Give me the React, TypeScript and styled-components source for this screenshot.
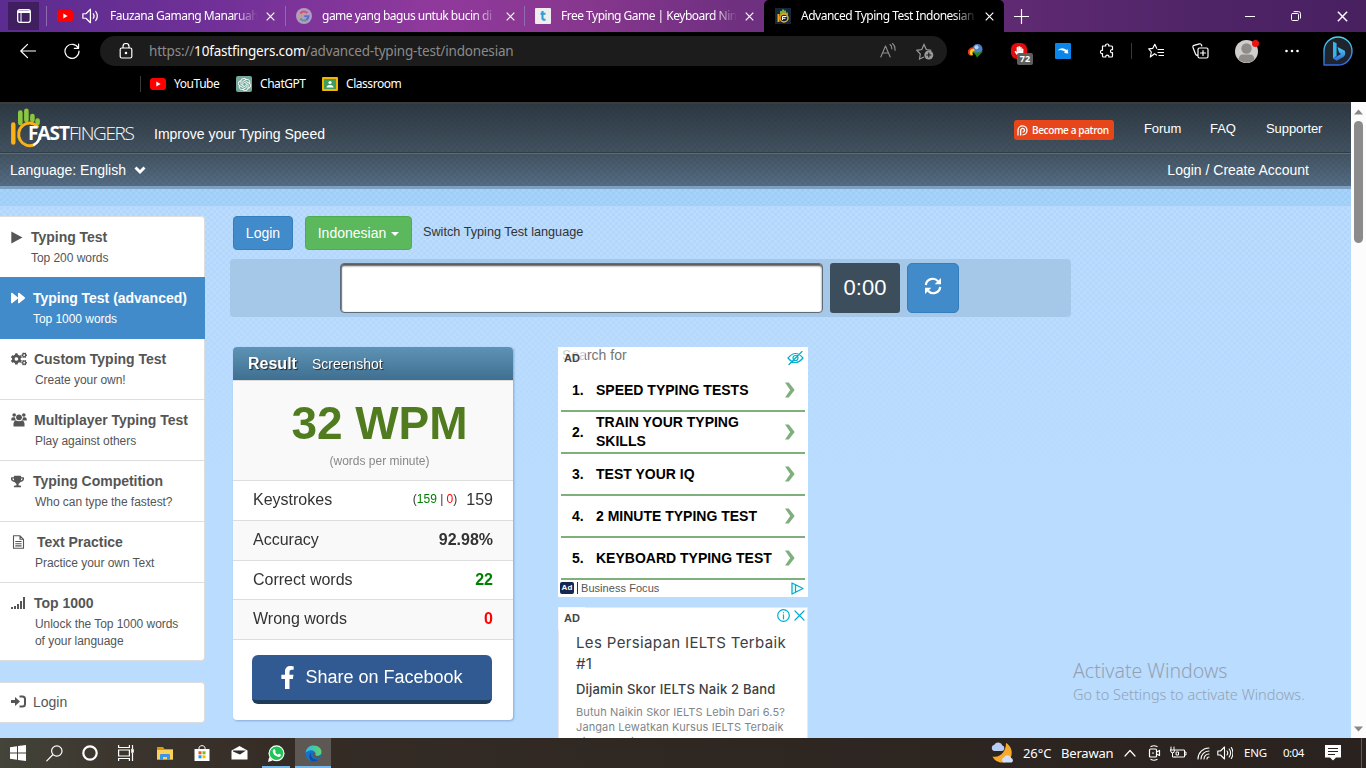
import React from "react";
import styled, { createGlobalStyle, css } from "styled-components";
import {
  FaForward, FaCogs, FaTrophy, FaFacebookF, FaHandPaper,
} from "react-icons/fa";
import { SiOpenai } from "react-icons/si";

const Global = createGlobalStyle`
  * { box-sizing: border-box; }
  html, body { margin: 0; padding: 0; }
  body { width: 1366px; height: 768px; overflow: hidden; background: #000; }
  svg { display: block; flex: none; }
`;

const ui = `"Noto Sans", "Open Sans", sans-serif`;
const arial = `"Liberation Sans", Arial, sans-serif`;

const Desktop = styled.div`
  width: 1366px;
  height: 768px;
  display: flex;
  flex-direction: column;
  font-family: ${arial};
  white-space: nowrap;
`;

/* ---------- browser chrome ---------- */
const TabStrip = styled.div`
  height: 32px;
  flex: none;
  display: flex;
  align-items: center;
  background: linear-gradient(90deg, #5c2c90 0, #6f3097 15%, #90399c 32%, #88378f 42%, #6f3080 54%, #5f2a72 74%, #4f2467 88%, #482060 100%);
`;
const TabActions = styled.div`
  width: 31px;
  height: 28px;
  margin-left: 8px;
  background: #3f1f60;
  display: flex;
  align-items: center;
  justify-content: center;
`;
const Tab = styled.div<{ $w: number; $active?: boolean }>`
  width: ${(p) => p.$w}px;
  height: 32px;
  display: flex;
  align-items: center;
  padding-left: 10px;
  ${(p) => p.$active && css`background: #000; border-radius: 5px 5px 0 0; padding-left: 11px;`}
`;
const Divider = styled.i`
  width: 1px;
  height: 20px;
  background: #8f6bb0;
`;
const TabTitle = styled.span<{ $w: number }>`
  width: ${(p) => p.$w}px;
  margin: 0 8px 1px 10px;
  overflow: hidden;
  font: 12px/18px ${ui};
  letter-spacing: -0.5px;
  color: #fff;
  mask-image: linear-gradient(90deg, #000 calc(100% - 24px), transparent 100%);
`;
const Spacer = styled.div<{ $w?: number }>`
  ${(p) => (p.$w !== undefined ? css`width: ${p.$w}px; flex: none;` : css`flex: 1;`)}
`;

const Toolbar = styled.div`
  height: 38px;
  flex: none;
  display: flex;
  align-items: center;
  background: #000;
`;
const AddressBar = styled.div`
  width: 847px;
  height: 30px;
  border-radius: 15px;
  background: #1c1c1c;
  display: flex;
  align-items: center;
  padding: 0 13px 0 19px;
`;
const Url = styled.span`
  flex: 1;
  padding-left: 16px;
  font: 13.5px/20px ${ui};
  letter-spacing: -0.18px;
  color: #8b8b8b;
  b { font-weight: 400; color: #fff; }
`;
const Extensions = styled.div<{ $gap: number; $pl: number }>`
  display: flex;
  align-items: center;
  gap: ${(p) => p.$gap}px;
  padding-left: ${(p) => p.$pl}px;
`;
const IconBox = styled.div<{ $w?: number; $bg?: string; $r?: number }>`
  position: relative;
  width: ${(p) => p.$w ?? 16}px;
  height: ${(p) => p.$w ?? 16}px;
  border-radius: ${(p) => p.$r ?? 0}px;
  background: ${(p) => p.$bg ?? "none"};
  display: flex;
  align-items: center;
  justify-content: center;
  color: #fff;
  flex: none;
`;
const CountBadge = styled.span`
  position: absolute;
  left: 6px;
  top: 10px;
  width: 16px;
  height: 12px;
  border-radius: 2px;
  background: #5e5e5e;
  color: #fff;
  font: bold 9px/12px ${ui};
  text-align: center;
`;
const AlertDot = styled.i`
  position: absolute;
  right: -1px;
  top: 0;
  width: 7px;
  height: 7px;
  border-radius: 50%;
  background: #e11;
`;
const Bookmarks = styled.div`
  height: 32px;
  flex: none;
  display: flex;
  align-items: center;
  padding: 0 0 4px 140px;
  background: #000;
`;
const BookmarkRule = styled.i`
  width: 1px;
  height: 16px;
  margin-right: 9px;
  background: #3a3a3a;
`;
const BookmarkLabel = styled.span<{ $w: number }>`
  width: ${(p) => p.$w}px;
  margin-left: 8px;
  font: 12px/16px ${ui};
  letter-spacing: -0.45px;
  color: #fff;
`;

/* ---------- page ---------- */
const Viewport = styled.div`
  height: 636px;
  flex: none;
  display: flex;
  overflow: hidden;
`;
const weave = (a: number) =>
  `repeating-conic-gradient(rgba(0,40,90,${a}) 0 25%, transparent 0 50%) 0 0 / 6px 6px`;
const Page = styled.div`
  width: 1351px;
  height: 636px;
  overflow: hidden;
  background: linear-gradient(rgba(186, 220, 255, 0) 100px, #badcff 400px), ${weave(0.035)}, #badcff;
`;
const SiteHeader = styled.header`
  height: 84px;
  border-top: 2px solid #3d3c3b;
  background: ${weave(0.07)}, linear-gradient(#2e3841, #43535f 60%, #566d84);
  color: #fff;
`;
const HeaderMain = styled.div`
  height: 50px;
  display: flex;
  align-items: center;
  border-bottom: 1px solid #5f6c77;
  box-shadow: inset 0 -1px 0 #303c46;
  padding-left: 10px;
`;
const LogoText = styled.span`
  width: 106px;
  margin: 8px 0 0 -23px;
  z-index: 1;
  font: 300 19px/24px "Open Sans", sans-serif;
  letter-spacing: -1.35px;
  b { font-weight: 700; letter-spacing: -1px; }
`;
const Tagline = styled.span`
  width: 880px;
  padding: 11px 0 0 20px;
  font-size: 14px;
  line-height: 18px;
`;
const Patron = styled.a`
  width: 100px;
  height: 20px;
  margin-top: 3px;
  border-radius: 3px;
  background: #e6461a;
  display: flex;
  align-items: center;
  gap: 4px;
  padding-left: 3px;
  font: 600 10px/20px "Open Sans", sans-serif;
  letter-spacing: -0.38px;
`;
const NavLink = styled.a<{ $w: number }>`
  width: ${(p) => p.$w}px;
  margin-left: 30px;
  margin-top: 1px;
  font-size: 13px;
  line-height: 18px;
  letter-spacing: -0.08px;
`;
const HeaderSub = styled.div`
  height: 32px;
  display: flex;
  align-items: center;
  gap: 8px;
  padding: 0 42px 0 10px;
  font-size: 14px;
`;
const SkyBand = styled.div`
  height: 20px;
  border-top: 3px solid #7d9fc0;
  background: ${weave(0.035)}, #a5d3fc;
`;
const Columns = styled.div`
  display: flex;
  align-items: flex-start;
  padding-top: 10px;
`;
const Sidebar = styled.nav`
  width: 205px;
  margin-right: 25px;
  color: #555;
`;
const MenuCard = styled.div`
  background: #fff;
  border: 1px solid #ddd;
  border-left: 0;
  border-top: 0;
  border-radius: 0 4px 4px 0;
  margin-bottom: 21px;
`;
const MenuItem = styled.div<{ $active?: boolean; $h?: number }>`
  height: ${(p) => p.$h ?? 61}px;
  border-top: 1px solid #ddd;
  padding-top: 10px;
  display: flex;
  &:first-child { border-top-right-radius: 4px; }
  ${(p) =>
    p.$active &&
    css`
      position: relative;
      margin-right: -1px;
      color: #fff;
      background: #428bca;
      border-color: #428bca;
      box-shadow: 0 1px 0 #428bca;
    `}
`;
const MenuIcon = styled.div<{ $w: number }>`
  width: ${(p) => p.$w}px;
  height: 20px;
  padding-left: 11px;
  display: flex;
  align-items: center;
`;
const MenuTitle = styled.div`
  font-weight: bold;
  font-size: 14px;
  line-height: 20px;
  letter-spacing: -0.02px;
`;
const MenuSub = styled.div<{ $dx: number }>`
  margin: 3px 0 0 ${(p) => p.$dx}px;
  font-size: 12px;
  line-height: 17px;
  letter-spacing: -0.05px;
  white-space: pre;
`;
const LoginCard = styled(MenuCard)`
  height: 41px;
  border-top: 1px solid #ddd;
  display: flex;
  align-items: center;
  gap: 7px;
  padding: 0 0 2px 11px;
  font-size: 14px;
`;
const Main = styled.main`
  width: 841px;
`;
const ButtonRow = styled.div`
  height: 43px;
  display: flex;
  padding-left: 3px;
`;
const Btn = styled.a<{ $w: number; $c: string; $b: string }>`
  width: ${(p) => p.$w}px;
  height: 34px;
  margin-right: 12px;
  border-radius: 4px;
  border: 1px solid ${(p) => p.$b};
  background: ${(p) => p.$c};
  color: #fff;
  font-size: 14px;
  display: flex;
  align-items: center;
  justify-content: center;
  gap: 5px;
`;
const Caret = styled.i`
  margin-top: 2px;
  border: 4px solid transparent;
  border-top-color: #fff;
  border-bottom: 0;
`;
const SwitchLabel = styled.span`
  margin: 7px 0 0 -1px;
  font-size: 12.7px;
  line-height: 18px;
  color: #333;
`;
const TypingWell = styled.div`
  height: 58px;
  border-radius: 4px;
  background: #a6c8e8;
  display: flex;
  align-items: center;
  gap: 7px;
  padding-left: 110px;
`;
const TypeInput = styled.div`
  width: 483px;
  height: 50px;
  border: 1px solid #5d6b7a;
  border-radius: 4px;
  background: #fff;
  box-shadow: inset 0 2px 2px #555, inset 1px 0 1px #888;
`;
const Timer = styled.div<{ $w: number; $c: string }>`
  width: ${(p) => p.$w}px;
  height: 50px;
  border-radius: 3px;
  background: ${(p) => p.$c};
  color: #fff;
  font-size: 22px;
  display: flex;
  align-items: center;
  justify-content: center;
`;
const Refresh = styled(Timer)`
  border: 1px solid #357ebd;
  border-radius: 5px;
  padding-bottom: 5px;
`;
const Cards = styled.div`
  display: flex;
  align-items: flex-start;
  padding: 30px 0 0 3px;
`;
const Result = styled.section`
  width: 280px;
  height: 373px;
  margin-right: 45px;
  border-radius: 4px;
  overflow: hidden;
  background: #fff;
  filter: drop-shadow(1px 1px 1px rgba(70, 110, 170, 0.45));
`;
const ResultHead = styled.div`
  height: 33px;
  padding-left: 15px;
  display: flex;
  align-items: center;
  gap: 15px;
  background: linear-gradient(#5e93b5, #3f6f90);
  color: #fff;
  text-shadow: 1px 1px 1px #222;
  font-size: 14px;
  b { font-size: 16px; }
`;
const Score = styled.div`
  height: 100px;
  border-top: 1px solid #ddd;
  background: #f9f9f9;
  text-align: center;
  padding: 16px 0 0 13px;
`;
const Wpm = styled.div`
  font-weight: bold;
  font-size: 46px;
  line-height: 52px;
  letter-spacing: -0.1px;
  color: #507b1e;
`;
const WpmNote = styled.div`
  margin-top: 4px;
  font-size: 12px;
  line-height: 17px;
  color: #888;
`;
const StatRow = styled.div<{ $alt?: boolean; $h?: number }>`
  height: ${(p) => p.$h ?? 40}px;
  border-top: 1px solid #ddd;
  background: ${(p) => (p.$alt ? "#f9f9f9" : "#fff")};
  display: flex;
  align-items: center;
  padding: 0 20px ${(p) => (p.$h ? 0 : 2)}px 20px;
  font-size: 16px;
  color: #333;
`;
const Small = styled.span`
  margin-right: 9px;
  padding-bottom: 2px;
  font-size: 12px;
`;
const Tint = styled.span<{ $c: string }>`
  color: ${(p) => p.$c};
`;
const ShareArea = styled.div`
  height: 81px;
  border-top: 1px solid #ddd;
  padding: 15px 0 0 19px;
`;
const ShareButton = styled.div`
  width: 240px;
  height: 49px;
  border-radius: 6px;
  border-bottom: 4px solid #1e3c5a;
  background: #315a92;
  color: #fff;
  font-size: 18px;
  display: flex;
  align-items: center;
  justify-content: center;
  gap: 6px;
  padding-right: 5px;
`;
const Ads = styled.aside`
  display: flex;
  flex-direction: column;
  gap: 10px;
  width: 250px;
`;
const SearchAd = styled.div`
  position: relative;
  height: 250px;
  padding: 0 3px;
  background: #fff;
`;
const SearchFor = styled.div`
  height: 23px;
  padding-left: 1px;
  font-size: 14px;
  line-height: 17px;
  color: #757575;
`;
const AdTag = styled.span<{ $o?: number }>`
  position: absolute;
  left: -${(p) => p.$o ?? 0}px;
  top: -${(p) => p.$o ?? 0}px;
  width: 27px;
  height: 23px;
  padding: 3px 0 0 6px;
  background: rgba(255, 255, 255, 0.65);
  font: bold 11px/17px ${arial};
  color: #444;
`;
const AdCorner = styled.div<{ $t: number; $r: number; $b?: number }>`
  position: absolute;
  right: ${(p) => p.$r}px;
  ${(p) => (p.$b !== undefined ? `bottom: ${p.$b}px;` : `top: ${p.$t}px;`)}
  display: flex;
  gap: 4px;
`;
const AdRow = styled.div`
  height: 42px;
  border-bottom: 2px solid #7faf7c;
  display: flex;
  align-items: center;
  padding: 0 9px 0 11px;
  font: bold 14px/19px ${arial};
  color: #000;
  white-space: normal;
`;
const AdNum = styled.span`
  width: 24px;
`;
const AdLabel = styled.span`
  flex: 1;
`;
const AdFoot = styled.div`
  height: 16px;
  margin-left: -1px;
  display: flex;
  align-items: center;
  gap: 3px;
  font-size: 11px;
  letter-spacing: 0.05px;
  color: #555;
  i { width: 1px; height: 12px; background: #333; }
`;
const AdBadge = styled.b`
  width: 14px;
  height: 12px;
  border-radius: 2px;
  background: #14274f;
  color: #fff;
  font-size: 8px;
  line-height: 12px;
  text-align: center;
`;
const TextAd = styled.div`
  position: relative;
  height: 250px;
  padding: 24px 0 0 18px;
  background: #fff;
  border: 1px solid #e8e8ee;
  font-family: Inter, sans-serif;
`;
const AdLine = styled.div<{ $s: number; $lh: number; $ls: number; $c: string; $mt?: number; $w?: number }>`
  margin: ${(p) => p.$mt ?? 0}px 0 0 -1px;
  font-size: ${(p) => p.$s}px;
  line-height: ${(p) => p.$lh}px;
  letter-spacing: ${(p) => p.$ls}px;
  font-weight: ${(p) => p.$w ?? 400};
  color: ${(p) => p.$c};
`;
const Watermark = styled.div`
  position: absolute;
  left: 1073px;
  top: 658px;
  font: 300 14.5px/20px ${ui};
  color: #93a2b3;
  div { font-size: 19.5px; line-height: 26px; }
`;
const Scrollbar = styled.div`
  width: 15px;
  background: #fcfcfc;
  display: flex;
  flex-direction: column;
  align-items: center;
  padding: 7px 0 6px;
`;
const Thumb = styled.i`
  width: 9px;
  height: 122px;
  margin-top: 6px;
  border-radius: 5px;
  background: #8b8b8b;
`;

/* ---------- taskbar ---------- */
const Taskbar = styled.div`
  height: 30px;
  flex: none;
  display: flex;
  align-items: center;
  background: linear-gradient(90deg, #43443a, #3c362e 8%, #352c26 20%, #2f2722 50%, #2a221e);
  color: #fff;
`;
const TaskButton = styled.div<{ $w: number; $open?: boolean; $active?: boolean }>`
  width: ${(p) => p.$w}px;
  height: 30px;
  display: flex;
  align-items: center;
  justify-content: center;
  background: ${(p) => (p.$active ? "#5d5853" : "none")};
  border-bottom: 2px solid ${(p) => (p.$open ? "#76b9ed" : "transparent")};
  padding-top: 2px;
`;
const TrayText = styled.span<{ $w: number; $s?: number; $ls?: number }>`
  width: ${(p) => p.$w}px;
  font: ${(p) => p.$s ?? 12}px/18px ${ui};
  letter-spacing: ${(p) => p.$ls ?? 0}px;
  padding-bottom: 1px;
`;
const DesktopPeek = styled.i`
  width: 1px;
  height: 30px;
  background: #5f5955;
`;

/* ---------- drawings ---------- */
const YouTubeMark = () => (
  <svg width="16" height="12" viewBox="0 0 16 12"><rect width="16" height="12" rx="3" fill="#f00" /><path d="M6.3 3.5v5L10.6 6z" fill="#fff" /></svg>
);
const Cross = ({ s = 9 }: { s?: number }) => (
  <svg width={s} height={s} viewBox="0 0 9 9"><path d="M.7.7l7.6 7.6M8.3.7L.7 8.3" stroke="#fff" strokeWidth="1.2" /></svg>
);
const Line = ({ w = 16, h = 16, vb, d, c = "#fff", sw = 1.2 }: { w?: number; h?: number; vb?: string; d: string; c?: string; sw?: number }) => (
  <svg width={w} height={h} viewBox={vb ?? `0 0 ${w} ${h}`} fill="none" stroke={c} strokeWidth={sw} strokeLinecap="round" strokeLinejoin="round"><path d={d} /></svg>
);
const GoogleMark = () => (
  <svg width="16" height="16" viewBox="0 0 16 16" fill="none" strokeWidth="2">
    <circle cx="8" cy="8" r="8" fill="#b39cc4" />
    <path d="M11.3 5A4.5 4.5 0 0 0 4.2 5.6" stroke="#d4536a" /><path d="M4.2 5.6a4.5 4.5 0 0 0 0 4.8" stroke="#c9a36a" />
    <path d="M4.2 10.4a4.5 4.5 0 0 0 6.2 1.4" stroke="#5b9a86" /><path d="M10.4 11.8A4.5 4.5 0 0 0 12.5 8.200H8.300" stroke="#5572cc" />
  </svg>
);
const TMark = () => (
  <svg width="16" height="16" viewBox="0 0 16 16"><rect width="16" height="16" rx="1" fill="#eee" /><path d="M7.500 3v7.500q0 1.500 3 1.100M5.500 5.800h5" stroke="#2f9bd8" strokeWidth="2.100" fill="none" /></svg>
);
const HandFavicon = () => (
  <svg width="16" height="16" viewBox="0 0 16 16" fill="none"><rect width="16" height="16" fill="#14283a" />
    <path d="M6 7V3M8 6V1.500M10 6V2.500M12 7V4.500" stroke="#8fbf3a" strokeWidth="1.700" />
    <path d="M3.500 6v8" stroke="#f3a81c" strokeWidth="2" /><circle cx="9" cy="10" r="4" stroke="#f3a81c" strokeWidth="1.500" /><path d="M7.500 12V8.500h4M7.500 10.300h3" stroke="#fff" />
  </svg>
);
const HandLogo = () => (
  <svg width="41" height="46" viewBox="0 0 41 46" fill="none" strokeLinecap="round">
    <path d="M10.300 17V6.500M16.400 14V4.800M22.400 14V10M27.600 17v-2.500" stroke="#8dc63f" strokeWidth="4.600" />
    <path d="M3.300 18.500v18" stroke="#fbb116" strokeWidth="4.400" />
    <path d="M27.500 20.500A11 11.300 0 1 0 24 38.800" stroke="#fbb116" strokeWidth="3" />
    <path d="M24 38.800q5.500-3 6-10" stroke="#fff" strokeWidth="2.400" />
  </svg>
);
const PatreonMark = () => (
  <svg width="11" height="11" viewBox="0 0 11 11" fill="none" stroke="#fff" strokeWidth="1.300"><path d="M1 10.500V5.200A4.500 4.500 0 1 1 5.500 9.900" /><path d="M3.700 10.500V5.300A1.900 1.900 0 1 1 5.600 7.200" /></svg>
);
const BoldChevron = () => (
  <svg width="12" height="8" viewBox="0 0 12 8"><path d="M1.500 1.500L6 6l4.500-4.500" fill="none" stroke="#fff" strokeWidth="2.900" /></svg>
);
const PlayGlyph = () => (
  <svg width="12" height="13" viewBox="0 0 12 13"><path d="M.3.5L11.500 6.500.3 12.500z" fill="#555" /></svg>
);
const PeopleGlyph = () => (
  <svg width="16" height="14" viewBox="0 0 16 14" fill="#555"><circle cx="3.200" cy="2" r="1.800" /><circle cx="12.800" cy="2" r="1.800" /><circle cx="8" cy="4.300" r="2.900" /><path d="M.3 7.500V6q0-1.800 1.800-1.800 1.300 0 2 .4Q4.200 6.500 5 7.500zM15.700 7.500V6q0-1.800-1.800-1.800-1.300 0-2 .4-.1 1.900-.9 2.900zM2.500 13.500v-3q0-2.700 2.500-3 3 1.500 6 0 2.500.3 2.500 3v3z" /></svg>
);
const RefreshGlyph = () => (
  <svg width="18" height="18" viewBox="0 0 18 18"><g fill="none" stroke="#fff" strokeWidth="2.200"><path d="M1.800 8A7 7 0 0 1 14 4.200" /><path d="M16.200 10A7 7 0 0 1 4 13.800" /></g><path d="M17 1v6.300h-6.300zM1 17v-6.300h6.300z" fill="#fff" /></svg>
);
const SignalBars = () => (
  <svg width="15" height="13" viewBox="0 0 15 13" fill="#555"><path d="M0 10h2v2H0zM3 9h2v3H3zM6 7h2v5H6zM9 4h2v8H9zM12 0h2v12h-2z" /></svg>
);
const SignIn = () => (
  <svg width="15" height="14" viewBox="0 0 15 14"><path d="M0 5h4V2l5 4.500L4 11V8H0z" fill="#555" /><path d="M8.500 1.500h3q2.500 0 2.500 2.500v5q0 2.500-2.500 2.500h-3" fill="none" stroke="#555" strokeWidth="2" /></svg>
);
const AdChevron = () => (
  <svg width="12" height="16" viewBox="0 0 12 16"><path d="M1 .5h3.800L10.700 8 4.800 15.500H1L6.200 8z" fill="#7faf7c" /></svg>
);
const Speaker = ({ arcs = 2, s = 16 }: { arcs?: number; s?: number }) => (
  <Line w={s} h={s} vb="0 0 16 16" d={`M.8 6h2.700l4-4v12l-4-4H.8zM10 6q1.500 2 0 4M12.200 4q2.800 4 0 8${arcs > 2 ? "M14.300 2.500q3.400 5.500 0 11" : ""}`} sw={1.1} />
);
const Bing = () => (
  <svg width="30" height="30" viewBox="0 0 30 30"><defs><linearGradient id="bg" x1="0" y1="0" x2="0" y2="1"><stop stopColor="#46d3ee" /><stop offset="1" stopColor="#3268dc" /></linearGradient></defs>
    <path d="M1 29V15A14 14 0 1 1 15 29z" fill="#20242c" stroke="url(#bg)" strokeWidth="1.400" />
    <path d="M10 5.500l3.600 1.800v12.500l-3.600 3z" fill="#36b3ee" /><path d="M14.500 11l7.300 3.800q1.500 4-1.500 6.200l-6.500 3.800L10 22.500l8-4.500-2-1.500z" fill="url(#bg)" />
  </svg>
);
const IdmIcon = () => (
  <svg width="16" height="16" viewBox="0 0 16 16"><circle cx="10.500" cy="6" r="5" fill="#4f7fc8" /><circle cx="9.500" cy="4.300" r="2" fill="#b9d6f4" /><path d="M6.500 4C1 4.500-.5 9 2 12q1.500 1.300 3.500.5C4.500 10 5 8 8 7z" fill="#e6331c" /><path d="M6.500 5.500C3 6 2 9 3.500 11.700l2.500.6C5 10 5.500 8.500 8 7z" fill="#ffd21f" /><path d="M5 8.500q5 2 11-.3L13.500 11 10 14.500l-1.500-2.700z" fill="#1e8b1e" /></svg>
);
const Folder = () => (
  <svg width="16" height="14" viewBox="0 0 16 14"><path d="M0 1h6l1.500 2H16v10.500H0z" fill="#d99a0a" /><path d="M0 4h16v9.500H0z" fill="#fdd25a" /><path d="M3 14V9q0-1 1-1h8q1 0 1 1v5h-3v-3H6v3z" fill="#3b96e6" /></svg>
);
const Store = () => (
  <svg width="16" height="16" viewBox="0 0 16 16"><path d="M5 5V2.200q3-3.200 6 0V5" fill="none" stroke="#fff" /><path d="M.5 4h15v12H.5z" fill="#fff" /><path d="M4.500 6.300H7.500v3h-3z" fill="#f25022" /><path d="M8.500 6.300h3v3h-3z" fill="#7fba00" /><path d="M4.500 10.300h3v3h-3z" fill="#00a4ef" /><path d="M8.500 10.300h3v3h-3z" fill="#ffb900" /></svg>
);
const EdgeIcon = () => (
  <svg width="17" height="17" viewBox="0 0 17 17"><defs><linearGradient id="eg"><stop stopColor="#2fb7ea" /><stop offset="1" stopColor="#5cd66a" /></linearGradient></defs>
    <circle cx="8.500" cy="8.500" r="8" fill="#1573c9" /><path d="M.6 8C1 3 4.500.5 8.500.5c5 0 8 3.200 8 6.500 0 3-2.500 4.200-5 4-1.800-.2-2-1.300-1.200-2.200C10.500 6 7 4.500 4.500 5.500 2 6.500 1 7 .6 8z" fill="url(#eg)" /><path d="M6.200 7.800C5 11 7.500 15 13.300 14.700A8 8 0 0 1 7 16.300C3.500 14 3.800 9.500 6.200 7.800z" fill="#0c4f9e" /><path d="M7.500 8q1.500-1.600 3 0-.9 1.800.6 2.800 2.300.8 5-1l-1.300 3q-3.500 1.400-5.700-.3Q7 10.500 7.500 8z" fill="#5d5853" /></svg>
);
const Weather = () => (
  <svg width="25" height="24" viewBox="0 0 25 24"><path d="M16 2c8 4 8 18-2 19.500C9 22 4 19.500 2.500 15.500 11 17 16 10 16 2z" fill="#f7a92c" /><path d="M4 10a3.200 3.200 0 0 1 .3-6.200 4.500 4.500 0 0 1 8.200.8A2.800 2.800 0 0 1 12 10z" fill="#b9cdf2" /><path d="M13.500 21.500a2.700 2.700 0 0 1 .4-5 4 4 0 0 1 7.300.5 2.400 2.400 0 0 1 .3 4.500z" fill="#cfe0fa" /></svg>
);

const menu: { icon: React.ReactNode; title: string; sub: string; x: number; dx: number; active?: boolean; h?: number }[] = [
  { icon: <PlayGlyph />, title: "Typing Test", sub: "Top 200 words", x: 31, dx: 0 },
  { icon: <FaForward size={14} />, title: "Typing Test (advanced)", sub: "Top 1000 words", x: 33, dx: 0, active: true },
  { icon: <FaCogs size={16} />, title: "Custom Typing Test", sub: "Create your own!", x: 34, dx: 1 },
  { icon: <PeopleGlyph />, title: "Multiplayer Typing Test", sub: "Play against others", x: 34, dx: 1 },
  { icon: <FaTrophy size={13} />, title: "Typing Competition", sub: "Who can type the fastest?", x: 33, dx: 2 },
  { icon: <Line w={16} h={14} d="M2.500.8h6.500l3.500 3.500v9h-10zM9 .8v3.500h3.500M4.700 6.500h5.500M4.700 8.700h5.500M4.700 10.900h5.500" c="#555" sw={1.1} />, title: "Text Practice", sub: "Practice your own Text", x: 37, dx: -2 },
  { icon: <SignalBars />, title: "Top 1000", sub: "Unlock the Top 1000 words\nof your language", x: 34, dx: 1, h: 78 },
];
const adRows = ["SPEED TYPING TESTS", "TRAIN YOUR TYPING SKILLS", "TEST YOUR IQ", "2 MINUTE TYPING TEST", "KEYBOARD TYPING TEST"];

export default function App() {
  return (
    <Desktop>
      <Global />
      <TabStrip>
        <TabActions><svg width="14" height="14" viewBox="0 0 14 14"><rect x=".7" y=".7" width="12.600" height="12.600" rx="2" fill="none" stroke="#fff" strokeWidth="1.300" /><path d="M1 1.500h12v2.500H1z" fill="#fff" /><path d="M4 4v9" stroke="#fff" /></svg></TabActions>
        <Spacer $w={7} />
        <Divider />
        <Tab $w={238}>
          <YouTubeMark /><Spacer $w={9} /><Speaker s={18} />
          <TabTitle $w={148}>Fauzana Gamang Manaruah</TabTitle><Cross />
        </Tab>
        <Divider />
        <Tab $w={238}>
          <GoogleMark /><TabTitle $w={176}>game yang bagus untuk bucin di</TabTitle><Cross />
        </Tab>
        <Divider />
        <Tab $w={239}>
          <TMark /><TabTitle $w={176}>Free Typing Game | Keyboard Nin</TabTitle><Cross />
        </Tab>
        <Tab $w={240} $active>
          <HandFavicon /><TabTitle $w={176}>Advanced Typing Test Indonesian</TabTitle><Cross />
        </Tab>
        <Spacer $w={10} />
        <Line w={15} h={15} d="M7.500.5v14M.5 7.500h14" />
        <Spacer />
        <Extensions $gap={36} $pl={0}>
          <Line w={10} h={10} d="M0 5.500h10" />
          <Line w={10} h={10} d="M1.500 2.500h5q1 0 1 1v5q0 1-1 1h-5q-1 0-1-1v-5q0-1 1-1zM3 .6h4.500q2 0 2 2v4.500" sw={1} />
          <Cross s={11} />
        </Extensions>
        <Spacer $w={18} />
      </TabStrip>

      <Toolbar>
        <Spacer $w={20} />
        <Line d="M15.500 8H.8M7.500 1.300L.8 8l6.700 6.700" />
        <Spacer $w={28} />
        <Line d="M14.300 5.200A7 7 0 1 0 15 8M14.600 1v4.300h-4.300" />
        <Spacer $w={20} />
        <AddressBar>
          <svg width="14" height="16" viewBox="0 0 14 16" fill="none" stroke="#fff" strokeWidth="1.200"><rect x="1.200" y="5" width="11.600" height="10" rx="1.500" /><path d="M4 5V3.500a3 3 0 0 1 6 0V5" /><circle cx="7" cy="10" r=".7" fill="#fff" /></svg>
          <Url>https://<b>10fastfingers.com</b>/advanced-typing-test/indonesian</Url>
          <Line w={16} d="M.8 14L5.500 3l4.700 11M2.500 10h6M10 1.500q2 1.500 1.800 4.500M12.500.5q3 2.500 2.500 7" c="#909090" sw={1.1} />
          <Spacer $w={20} />
          <svg width="18" height="17" viewBox="0 0 18 17" fill="none" stroke="#9a9a9a"><path d="M8 14l-4.500 2L4.300 11 .8 7.300l5-.8L8 1.500l2.300 5 5 .8" strokeWidth="1.200" /><circle cx="12.800" cy="12" r="4.500" fill="#9a9a9a" stroke="none" /><path d="M10.300 12h5M12.800 9.500v5" stroke="#1c1c1c" strokeWidth="1.200" /></svg>
        </AddressBar>
        <Extensions $gap={28} $pl={20}>
          <IdmIcon />
          <IconBox $bg="#e30b0b" $r={6}><FaHandPaper size={10} /><CountBadge>72</CountBadge></IconBox>
          <IconBox $bg="#0a86ea" $r={1}><svg width="12" height="10" viewBox="0 0 12 10"><path d="M.5 4.500Q5 .5 9.500 4l1-1 .8 4.500L7 7l1.200-1.200Q4.500 3 .5 4.500z" fill="#fff" /></svg></IconBox>
          <Line w={17} vb="0 0 16 16" d="M3 3h3.200q-.5-2 1.500-2t1.500 2H12q1 0 1 1v2.700q-2-.4-2 1.500t2 1.500V13q0 1-1 1H9.300q.3-1.800-1.500-1.800T6.300 14H4q-1 0-1-1v-2.500Q1 11 1 9t2-1.600z" />
        </Extensions>
        <Spacer $w={15} />
        <BookmarkRule />
        <Spacer $w={7} />
        <Line d="M8.500 12l-2-1.200L2.300 14l1-5L.8 5.800 4.800 5.300 6.800 1.300l1.900 4M10 6.500h5.500M10 9.500h5.500M11 12.500h4.500" />
        <Spacer $w={28} />
        <Line w={17} d="M6 12.500q-2 0-2.500-1.500L1 4.500Q.5 3 2 2.300L7.500.8Q9 .5 9.500 2l.3 1M7.500 5h7q1.500 0 1.500 1.500v7q0 1.500-1.500 1.500h-7Q6 15 6 13.500v-7Q6 5 7.500 5zM11 7.500v5M8.500 10h5" />
        <Spacer $w={26} />
        <IconBox $w={23}>
          <svg width="23" height="23" viewBox="0 0 23 23"><circle cx="11.500" cy="11.500" r="11.500" fill="#d0cecc" /><circle cx="11.500" cy="8.500" r="5.200" fill="#8f8c8a" /><path d="M3.500 19.500Q4 14.500 8 14.500h7q4 0 4.500 5Q12 26 3.500 19.500z" fill="#8f8c8a" /></svg>
          <AlertDot />
        </IconBox>
        <Spacer $w={27} />
        <svg width="14" height="4" viewBox="0 0 14 4" fill="#fff"><circle cx="1.500" cy="2" r="1.300" /><circle cx="7" cy="2" r="1.300" /><circle cx="12.500" cy="2" r="1.300" /></svg>
        <Spacer $w={24} />
        <Bing />
      </Toolbar>

      <Bookmarks>
        <BookmarkRule />
        <YouTubeMark /><BookmarkLabel $w={62}>YouTube</BookmarkLabel>
        <IconBox $bg="#75a99c" $r={2}><SiOpenai size={13} /></IconBox><BookmarkLabel $w={62}>ChatGPT</BookmarkLabel>
        <svg width="16" height="14" viewBox="0 0 16 14"><rect width="16" height="14" rx="1" fill="#f4b400" /><rect x="2" y="2" width="12" height="10" fill="#3f9c5c" /><circle cx="8" cy="5.500" r="1.600" fill="#fff" /><path d="M4.500 10.500q0-2.500 3.500-2.500t3.500 2.500z" fill="#fff" /></svg>
        <BookmarkLabel $w={62}>Classroom</BookmarkLabel>
      </Bookmarks>

      <Viewport>
        <Page>
          <SiteHeader>
            <HeaderMain>
              <HandLogo />
              <LogoText><b>FAST</b>FINGERS</LogoText>
              <Tagline>Improve your Typing Speed</Tagline>
              <Patron><PatreonMark />Become a patron</Patron>
              <NavLink $w={36}>Forum</NavLink>
              <NavLink $w={26}>FAQ</NavLink>
              <NavLink $w={60}>Supporter</NavLink>
            </HeaderMain>
            <HeaderSub>
              <span>Language: English</span><BoldChevron />
              <Spacer />
              <span>Login / Create Account</span>
            </HeaderSub>
          </SiteHeader>
          <SkyBand />
          <Columns>
            <Sidebar>
              <MenuCard>
                {menu.map((m) => (
                  <MenuItem key={m.title} $active={m.active} $h={m.h}>
                    <MenuIcon $w={m.x}>{m.icon}</MenuIcon>
                    <div>
                      <MenuTitle>{m.title}</MenuTitle>
                      <MenuSub $dx={m.dx}>{m.sub}</MenuSub>
                    </div>
                  </MenuItem>
                ))}
              </MenuCard>
              <LoginCard><SignIn />Login</LoginCard>
            </Sidebar>
            <Main>
              <ButtonRow>
                <Btn $w={60} $c="#428bca" $b="#357ebd">Login</Btn>
                <Btn $w={107} $c="#5cb85c" $b="#4cae4c">Indonesian<Caret /></Btn>
                <SwitchLabel>Switch Typing Test language</SwitchLabel>
              </ButtonRow>
              <TypingWell>
                <TypeInput />
                <Timer $w={70} $c="#3c4d5c">0:00</Timer>
                <Refresh $w={52} $c="#428bca"><RefreshGlyph /></Refresh>
              </TypingWell>
              <Cards>
                <Result>
                  <ResultHead><b>Result</b><span>Screenshot</span></ResultHead>
                  <Score><Wpm>32 WPM</Wpm><WpmNote>(words per minute)</WpmNote></Score>
                  <StatRow>Keystrokes<Spacer /><Small>(<Tint $c="green">159</Tint> | <Tint $c="red">0</Tint>)</Small>159</StatRow>
                  <StatRow $alt>Accuracy<Spacer /><b>92.98%</b></StatRow>
                  <StatRow $h={39}>Correct words<Spacer /><b><Tint $c="green">22</Tint></b></StatRow>
                  <StatRow $alt>Wrong words<Spacer /><b><Tint $c="red">0</Tint></b></StatRow>
                  <ShareArea><ShareButton><FaFacebookF size={23} />Share on Facebook</ShareButton></ShareArea>
                </Result>
                <Ads>
                  <SearchAd>
                    <SearchFor>Search for</SearchFor>
                    <AdTag>AD</AdTag>
                    <AdCorner $t={4} $r={4}><Line w={17} h={14} d="M1 7q7.500-9 15 0-7.500 9-15 0zM2 13.500L15 .5M11 7a2.500 2.500 0 1 1-5 0 2.500 2.500 0 0 1 5 0z" c="#00aecd" /></AdCorner>
                    {adRows.map((t, i) => (
                      <AdRow key={t}><AdNum>{i + 1}.</AdNum><AdLabel>{t}</AdLabel><AdChevron /></AdRow>
                    ))}
                    <AdFoot><AdBadge>Ad</AdBadge><i />Business Focus</AdFoot>
                    <AdCorner $t={0} $b={2} $r={4}><Line w={13} h={13} d="M1 1v11l11-5.500zM4.500 3v7" c="#00aecd" sw={1.300} /></AdCorner>
                  </SearchAd>
                  <TextAd>
                    <AdTag $o={1}>AD</AdTag>
                    <AdCorner $t={1} $r={2}>
                      <Line w={13} h={13} d="M12.300 6.500a5.800 5.800 0 1 1-11.600 0 5.800 5.800 0 0 1 11.600 0zM6.500 5.800v4M6.500 3.500v.2" c="#00aecd" />
                      <Line w={11} h={13} d="M1 2l9 9M10 2l-9 9" c="#00aecd" />
                    </AdCorner>
                    <AdLine $s={15} $lh={21} $ls={0.36} $c="#3c4043">Les Persiapan IELTS Terbaik<br />#1</AdLine>
                    <AdLine $s={13} $lh={19} $ls={0.2} $c="#3c4043" $mt={6} $w={500}>Dijamin Skor IELTS Naik 2 Band</AdLine>
                    <AdLine $s={11} $lh={15} $ls={0.1} $c="#80868b" $mt={6}>Butuh Naikin Skor IELTS Lebih Dari 6.5?<br />Jangan Lewatkan Kursus IELTS Terbaik<br />di Indonesia</AdLine>
                  </TextAd>
                </Ads>
              </Cards>
            </Main>
          </Columns>
        </Page>
        <Scrollbar>
          <svg width="9" height="6" viewBox="0 0 9 6"><path d="M0 5.500L4.500.5 9 5.500z" fill="#888" /></svg>
          <Thumb />
          <Spacer />
          <svg width="9" height="6" viewBox="0 0 9 6"><path d="M0 .5l4.500 5L9 .5z" fill="#888" /></svg>
        </Scrollbar>
      </Viewport>
      <Watermark><div>Activate Windows</div>Go to Settings to activate Windows.</Watermark>

      <Taskbar>
        <TaskButton $w={36}><svg width="16" height="16" viewBox="0 0 16 16" fill="#fff"><path d="M0 2.200l7-1v6.300H0zM8 1l8-1v7.500H8zM0 8.500h7v6.300l-7-1zM8 8.500h8V16l-8-1.100z" /></svg></TaskButton>
        <TaskButton $w={36}><Line w={17} h={17} d="M16 6a5.200 5.200 0 1 1-10.400 0A5.200 5.200 0 0 1 16 6zM7 9.500L.8 15.800" sw={1.2} /></TaskButton>
        <TaskButton $w={36}><svg width="16" height="16"><circle cx="8" cy="8" r="6.700" fill="none" stroke="#fff" strokeWidth="2.200" /></svg></TaskButton>
        <TaskButton $w={36}><svg width="16" height="16" viewBox="0 0 16 16" fill="none" stroke="#fff" strokeWidth="1.200"><path d="M.6 0v2.500h10.800V0M.6 16v-2.500h10.800V16M.6 5h10.800v6H.6zM14.500 0v4M14.500 8v8" /><rect x="13.500" y="4.500" width="2" height="3" fill="#fff" strokeWidth=".6" /></svg></TaskButton>
        <TaskButton $w={41}><Folder /></TaskButton>
        <TaskButton $w={33}><Store /></TaskButton>
        <TaskButton $w={42}><svg width="17" height="14" viewBox="0 0 17 14"><path d="M.5 4.500L8.500 0l8 4.500V13.500H.5z" fill="#fff" /><path d="M2 4.500h13L9 8.500 2 5.500z" fill="#352c26" /></svg></TaskButton>
        <Spacer $w={2} />
        <TaskButton $w={28} $open><svg width="17" height="17" viewBox="0 0 17 17"><circle cx="8.500" cy="8.300" r="8" fill="#fff" /><path d="M0 17l1.200-5 3.500 3.500z" fill="#fff" /><circle cx="8.500" cy="8.300" r="6.800" fill="#1fc457" /><path d="M5.500 4.500q1-1 1.600.3l.5 1.300q-.8 1 0 1.800 1 1.300 2.300 1.800.8-1.200 1.300-1l1.600.8q.2 2.500-2.400 2.500-5-1.500-5.700-5.500-.1-1.200.8-2z" fill="#fff" /></svg></TaskButton>
        <Spacer $w={5} />
        <TaskButton $w={36} $open $active><EdgeIcon /></TaskButton>
        <Spacer />
        <Weather />
        <Spacer $w={8} />
        <TrayText $w={38} $s={13} $ls={-0.1}>26°C</TrayText>
        <TrayText $w={63} $s={13} $ls={-0.2}>Berawan</TrayText>
        <Line w={12} h={8} d="M1 7l5-5.500L11 7" />
        <Spacer $w={12} />
        <Line w={13} h={16} d="M3 1.500q3-1.500 6 0M3 14.500q3 1.500 6 0M2.500 4h5q1 0 1 1v6q0 1-1 1h-5q-1 0-1-1V5q0-1 1-1zM8.500 7l3-1.500v5L8.500 9M4.500 8h1" />
        <Spacer $w={9} />
        <Line w={17} h={14} d="M5 4h9.500v7H5M14.500 6h1.500v3h-1.500M1 1v2.500M4 1v2.500M.5 4h4q0 3-2 3t-2-3zM2.500 7v4H5M6.500 6h2v3h-2z" sw={1} />
        <Spacer $w={10} />
        <Line w={13} h={13} d="M1 12A11 11 0 0 1 12 1M4 12a8 8 0 0 1 8-8M7 12a5 5 0 0 1 5-5M10 12a2 2 0 0 1 2-2" sw={1.1} />
        <Spacer $w={7} />
        <Speaker arcs={3} />
        <Spacer $w={11} />
        <TrayText $w={39} $s={11.5} $ls={-0.2}>ENG</TrayText>
        <TrayText $w={42} $s={11.5} $ls={-0.5}>0:04</TrayText>
        <svg width="16" height="16" viewBox="0 0 16 16"><path d="M0 0h16v12.500h-5L8 15.500l-3-3H0z" fill="#fff" /><path d="M3 3.500h10M3 6.500h10M3 9.500h7" stroke="#2a221e" /></svg>
        <Spacer $w={20} />
        <DesktopPeek />
        <Spacer $w={4} />
      </Taskbar>
    </Desktop>
  );
}
